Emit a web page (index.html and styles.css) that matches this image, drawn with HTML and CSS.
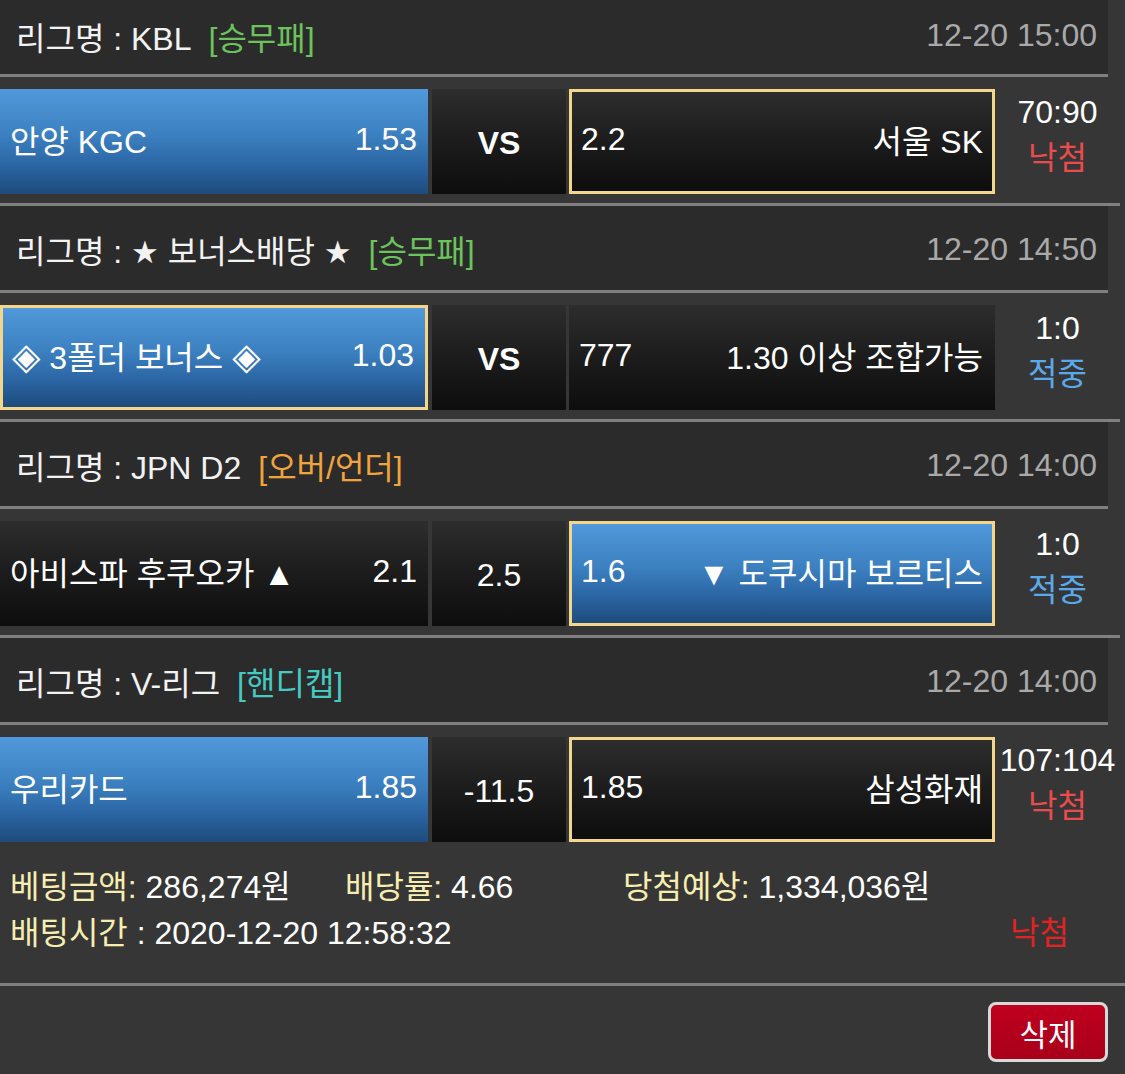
FILE: index.html
```html
<!DOCTYPE html>
<html lang="ko">
<head>
<meta charset="utf-8">
<title>베팅내역</title>
<link rel="stylesheet" href="styles.css">
</head>
<body>
<div class="slip">
  <div class="league league-first">
    <span class="league-name">리그명 : KBL<span class="tag tag-green">[승무패]</span></span>
    <span class="time">12-20 15:00</span>
  </div>
  <div class="match">
    <div class="pick pick-blue"><span>안양 KGC</span><span>1.53</span></div>
    <div class="mid mid-vs">VS</div>
    <div class="pick pick-dark pick-selected"><span>2.2</span><span>서울 SK</span></div>
    <div class="score"><div>70:90</div><div class="res-lose">낙첨</div></div>
  </div>

  <div class="league">
    <span class="league-name">리그명 : <span class="sym">★</span> 보너스배당 <span class="sym">★</span><span class="tag tag-green">[승무패]</span></span>
    <span class="time">12-20 14:50</span>
  </div>
  <div class="match">
    <div class="pick pick-blue pick-selected"><span><span class="sym sym-diamond">◈</span> 3폴더 보너스 <span class="sym sym-diamond">◈</span></span><span>1.03</span></div>
    <div class="mid mid-vs">VS</div>
    <div class="pick pick-dark"><span>777</span><span>1.30 이상 조합가능</span></div>
    <div class="score"><div>1:0</div><div class="res-win">적중</div></div>
  </div>

  <div class="league">
    <span class="league-name">리그명 : JPN D2<span class="tag tag-orange">[오버/언더]</span></span>
    <span class="time">12-20 14:00</span>
  </div>
  <div class="match">
    <div class="pick pick-dark"><span>아비스파 후쿠오카 ▲</span><span>2.1</span></div>
    <div class="mid">2.5</div>
    <div class="pick pick-blue pick-selected"><span>1.6</span><span>▼ 도쿠시마 보르티스</span></div>
    <div class="score"><div>1:0</div><div class="res-win">적중</div></div>
  </div>

  <div class="league">
    <span class="league-name">리그명 : V-리그<span class="tag tag-teal">[핸디캡]</span></span>
    <span class="time">12-20 14:00</span>
  </div>
  <div class="match match-last">
    <div class="pick pick-blue"><span>우리카드</span><span>1.85</span></div>
    <div class="mid">-11.5</div>
    <div class="pick pick-dark pick-selected"><span>1.85</span><span>삼성화재</span></div>
    <div class="score"><div>107:104</div><div class="res-lose">낙첨</div></div>
  </div>
</div>

<div class="summary">
  <div class="sum-line">
    <span class="sum-item sum-amount"><span class="label">베팅금액:</span> 286,274원</span>
    <span class="sum-item sum-rate"><span class="label">배당률:</span> 4.66</span>
    <span class="sum-item"><span class="label">당첨예상:</span> 1,334,036원</span>
  </div>
  <div class="sum-line">
    <span class="sum-item"><span class="label">배팅시간</span> : 2020-12-20 12:58:32</span>
    <span class="sum-result">낙첨</span>
  </div>
</div>

<div class="actions">
  <button class="btn-delete" type="button">삭제</button>
</div>
</body>
</html>
```

FILE: styles.css
```css
html, body {
  margin: 0;
  padding: 0;
}
body {
  background: #363636;
  color: #ffffff;
  font-family: "Liberation Sans", "Noto Sans CJK KR", sans-serif;
  font-size: 32px;
  width: 1125px;
  height: 1074px;
  overflow: hidden;
}
.slip {
  width: 1108px;
}
.sym {
  font-family: "DejaVu Sans", "Noto Sans CJK KR", sans-serif;
  font-size: 31px;
  line-height: 1;
}
.sym-diamond {
  font-size: 37px;
}
.league {
  box-sizing: border-box;
  height: 87px;
  padding: 2px 11px 0 16px;
  background: #2b2b2b;
  border-bottom: 3px solid #808080;
  display: flex;
  align-items: center;
  justify-content: space-between;
  color: #f2f2f2;
  white-space: nowrap;
}
.league-first {
  height: 77px;
  padding-top: 0;
  padding-bottom: 3px;
}
.tag {
  margin-left: 17px;
}
.tag-green { color: #6cc35c; }
.tag-orange { color: #f0a43c; }
.tag-teal { color: #45c9c1; }
.time {
  color: #a9a9a9;
}
.match {
  box-sizing: border-box;
  height: 129px;
  padding: 12px 0 9px 0;
  border-bottom: 3px solid #808080;
  display: flex;
  align-items: flex-start;
  width: 1120px;
}
.match-last {
  border-bottom: none;
  height: 126px;
}
.pick {
  box-sizing: border-box;
  height: 105px;
  display: flex;
  align-items: center;
  justify-content: space-between;
  padding: 0 11px 5px 10px;
  flex-shrink: 0;
  white-space: nowrap;
}
.pick:first-child {
  width: 428px;
}
.pick:nth-child(3) {
  width: 426px;
  margin-left: 3px;
  padding: 0 12px 5px 10px;
}
.pick-blue {
  background: linear-gradient(to bottom, #5199db 0%, #3b7fbf 45%, #2a63a1 75%, #1e4b7b 100%);
}
.pick-dark {
  background: linear-gradient(to bottom, #2d2d2d 0%, #1c1c1c 50%, #0d0d0d 100%);
}
.pick-selected {
  border: 3px solid #f3d68b;
  padding-left: 9px;
}
.pick:nth-child(3).pick-selected {
  padding: 0 9px 5px 9px;
}
.mid {
  box-sizing: border-box;
  width: 134px;
  height: 105px;
  margin-left: 4px;
  flex-shrink: 0;
  display: flex;
  align-items: center;
  justify-content: center;
  padding-top: 3px;
  background: linear-gradient(to bottom, #2d2d2d 0%, #1c1c1c 50%, #0d0d0d 100%);
}
.mid-vs {
  font-weight: bold;
}
.score {
  flex: 0 0 125px;
  text-align: center;
  line-height: 46px;
  white-space: nowrap;
}
.res-lose { color: #e84c4c; }
.res-win { color: #5aa9ea; }

.summary {
  box-sizing: border-box;
  width: 1125px;
  padding: 13px 0 27px 10px;
  border-bottom: 3px solid #808080;
  line-height: 46px;
}
.sum-line {
  display: flex;
  align-items: center;
}
.sum-amount { width: 335px; }
.sum-rate { width: 278px; }
.label { color: #f6eeb0; }
.sum-result {
  margin-left: auto;
  margin-right: 56px;
  color: #e32222;
}
.actions {
  display: flex;
  justify-content: flex-end;
  padding: 16px 17px 0 0;
}
.btn-delete {
  box-sizing: border-box;
  width: 120px;
  height: 60px;
  background: linear-gradient(to bottom, #c0001f, #a8001a);
  border: 3px solid #d9d9d9;
  border-radius: 8px;
  color: #ffffff;
  font-family: "Liberation Sans", "Noto Sans CJK KR", sans-serif;
  font-size: 31px;
  padding: 0;
  cursor: pointer;
}
```
